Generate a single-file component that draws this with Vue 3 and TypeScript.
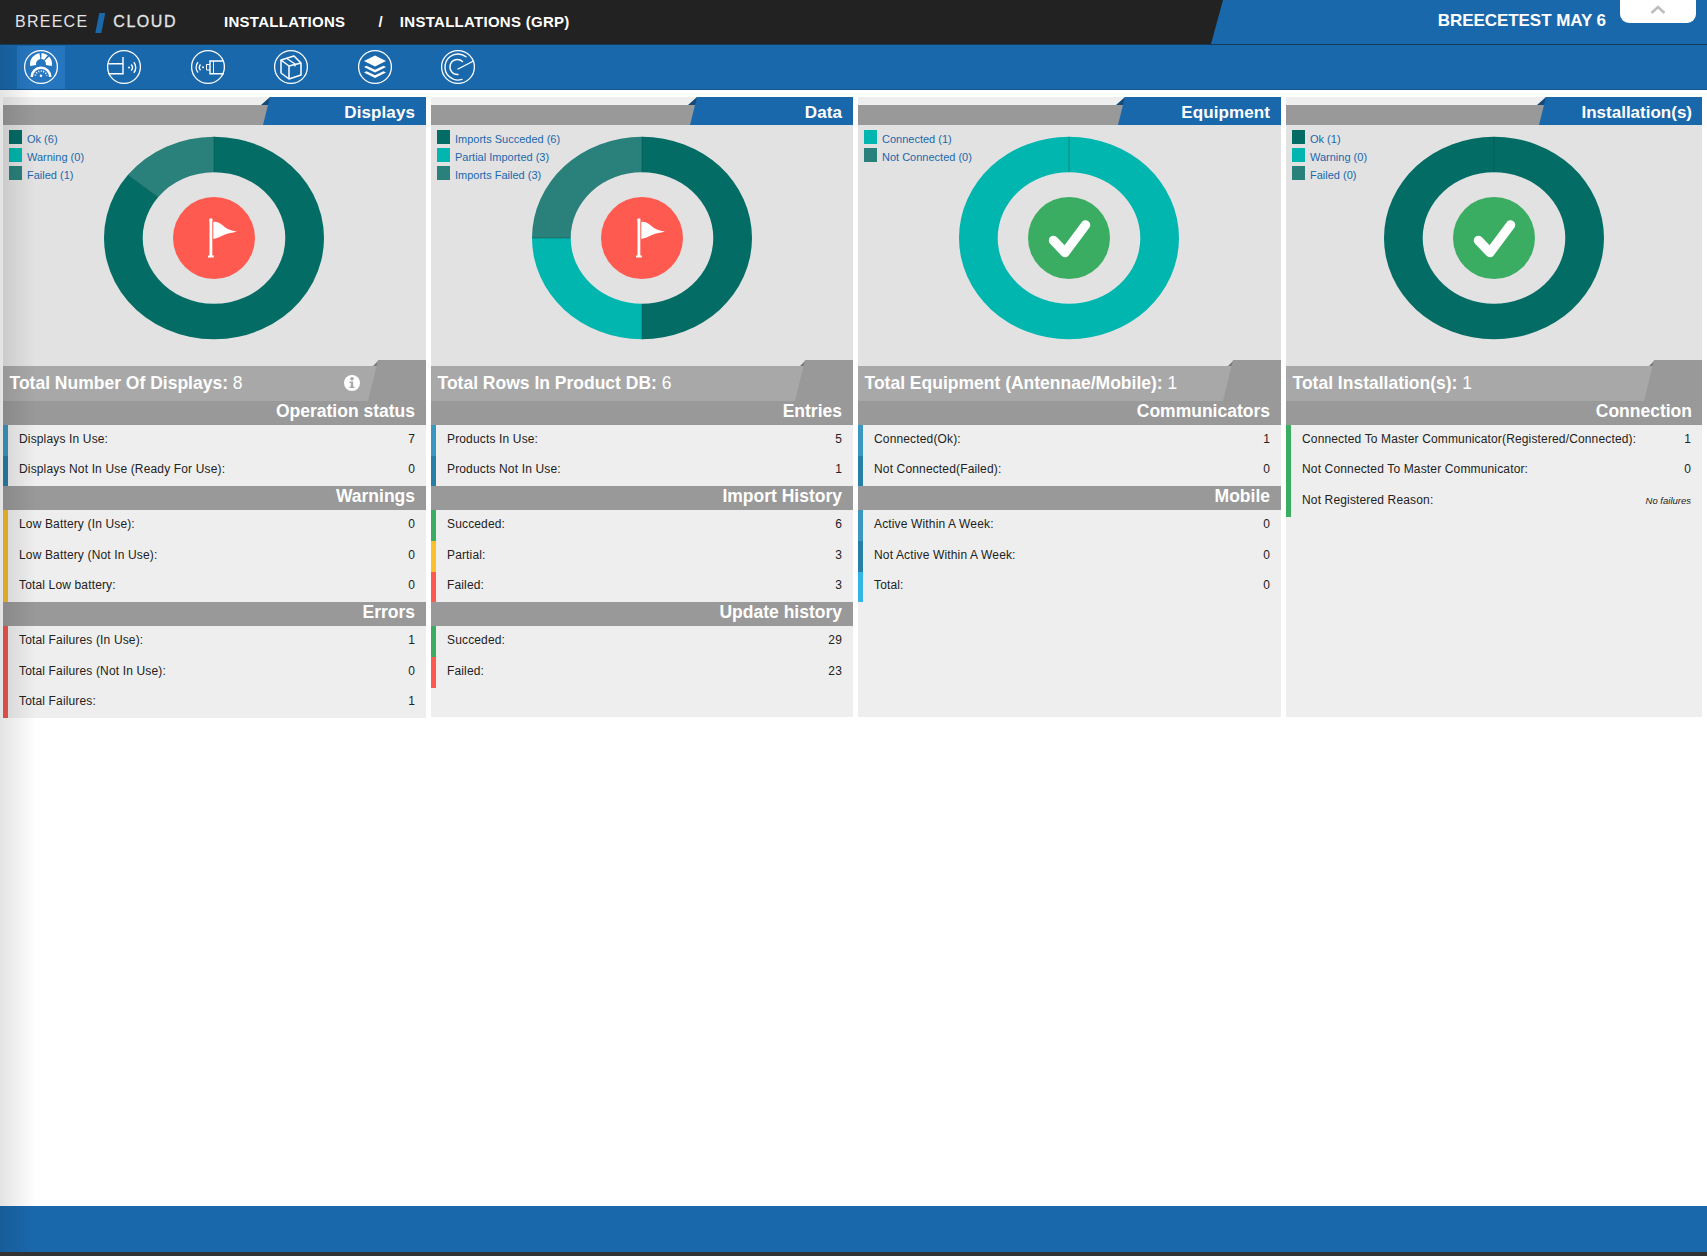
<script setup lang="ts">
interface Row { label: string; value: string; color: string; note?: boolean }
interface Section { title: string; rows: Row[] }
interface Legend { label: string; color: string; count: number }
interface Panel { tab: string; total: string; count: string; info?: boolean; ok: boolean; legend: Legend[]; sections: Section[] }

const DARK = '#026c65', TEAL = '#00b6ae', MID = '#2a807b'
const B1 = '#3a97bf', B2 = '#287fa6', B3 = '#35b5e5', Y = '#f2bb2c', Y2 = '#fbc02d', R = '#f0544f', R2 = '#ff5a4f', G = '#3bad62'

const panels: Panel[] = [
  { tab: 'Displays', total: 'Total Number Of Displays:', count: '8', info: true, ok: false,
    legend: [{ label: 'Ok (6)', color: DARK, count: 6 }, { label: 'Warning (0)', color: TEAL, count: 0 }, { label: 'Failed (1)', color: MID, count: 1 }],
    sections: [
      { title: 'Operation status', rows: [{ label: 'Displays In Use:', value: '7', color: B1 }, { label: 'Displays Not In Use (Ready For Use):', value: '0', color: B2 }] },
      { title: 'Warnings', rows: [{ label: 'Low Battery (In Use):', value: '0', color: Y }, { label: 'Low Battery (Not In Use):', value: '0', color: Y }, { label: 'Total Low battery:', value: '0', color: Y }] },
      { title: 'Errors', rows: [{ label: 'Total Failures (In Use):', value: '1', color: R }, { label: 'Total Failures (Not In Use):', value: '0', color: R }, { label: 'Total Failures:', value: '1', color: R }] },
    ] },
  { tab: 'Data', total: 'Total Rows In Product DB:', count: '6', ok: false,
    legend: [{ label: 'Imports Succeded (6)', color: DARK, count: 6 }, { label: 'Partial Imported (3)', color: TEAL, count: 3 }, { label: 'Imports Failed (3)', color: MID, count: 3 }],
    sections: [
      { title: 'Entries', rows: [{ label: 'Products In Use:', value: '5', color: B1 }, { label: 'Products Not In Use:', value: '1', color: B2 }] },
      { title: 'Import History', rows: [{ label: 'Succeded:', value: '6', color: G }, { label: 'Partial:', value: '3', color: Y2 }, { label: 'Failed:', value: '3', color: R2 }] },
      { title: 'Update history', rows: [{ label: 'Succeded:', value: '29', color: G }, { label: 'Failed:', value: '23', color: R2 }] },
    ] },
  { tab: 'Equipment', total: 'Total Equipment (Antennae/Mobile):', count: '1', ok: true,
    legend: [{ label: 'Connected (1)', color: TEAL, count: 1 }, { label: 'Not Connected (0)', color: MID, count: 0 }],
    sections: [
      { title: 'Communicators', rows: [{ label: 'Connected(Ok):', value: '1', color: B1 }, { label: 'Not Connected(Failed):', value: '0', color: B2 }] },
      { title: 'Mobile', rows: [{ label: 'Active Within A Week:', value: '0', color: B1 }, { label: 'Not Active Within A Week:', value: '0', color: B2 }, { label: 'Total:', value: '0', color: B3 }] },
    ] },
  { tab: 'Installation(s)', total: 'Total Installation(s):', count: '1', ok: true,
    legend: [{ label: 'Ok (1)', color: DARK, count: 1 }, { label: 'Warning (0)', color: TEAL, count: 0 }, { label: 'Failed (0)', color: MID, count: 0 }],
    sections: [
      { title: 'Connection', rows: [{ label: 'Connected To Master Communicator(Registered/Connected):', value: '1', color: G }, { label: 'Not Connected To Master Communicator:', value: '0', color: G }, { label: 'Not Registered Reason:', value: 'No failures', color: G, note: true }] },
    ] },
]

const RX = 110, RY = 101.3, IX = 71.3, IY = 65.8
const pt = (a: number, rx: number, ry: number) => `${(Math.sin(a) * rx).toFixed(2)} ${(-Math.cos(a) * ry).toFixed(2)}`

function arc(a0: number, a1: number): string {
  const large = a1 - a0 > Math.PI ? 1 : 0
  return `M${pt(a0, RX, RY)}A${RX} ${RY} 0 ${large} 1 ${pt(a1, RX, RY)}L${pt(a1, IX, IY)}A${IX} ${IY} 0 ${large} 0 ${pt(a0, IX, IY)}Z`
}

function slices(legend: Legend[]) {
  const sum = legend.reduce((s, l) => s + l.count, 0)
  let a = 0
  const out: { d: string; color: string; seam: string }[] = []
  for (const l of legend) {
    if (!l.count) continue
    const span = (l.count / sum) * Math.PI * 2
    const seam = `M${pt(a, IX, IY)}L${pt(a, RX, RY)}`
    if (span >= Math.PI * 2 - 0.001) {
      out.push({ d: arc(0, Math.PI) + arc(Math.PI, Math.PI * 2), color: l.color, seam })
    } else {
      out.push({ d: arc(a, a + span), color: l.color, seam })
    }
    a += span
  }
  return out
}

const navIcons = ['gauge', 'antenna', 'reader', 'box', 'layers', 'radar']
</script>

<template>
  <div class="page">
    <header class="top">
      <div class="logo">
        <span class="logo-a">BREECE</span>
        <span class="logo-slash"></span>
        <span class="logo-b">CLOUD</span>
      </div>
      <nav class="crumbs">
        <span>INSTALLATIONS</span>
        <span class="crumb-sep">/</span>
        <span>INSTALLATIONS (GRP)</span>
      </nav>
      <div class="account">
        <span class="account-name">BREECETEST MAY 6</span>
        <button class="collapse" type="button" aria-label="Collapse">
          <svg width="16" height="9" viewBox="0 0 16 9"><path d="M1.500 8 8 2l6.500 6" fill="none" stroke="#bdbdbd" stroke-width="2.600" /></svg>
        </button>
      </div>
    </header>

    <div class="toolbar">
      <a v-for="(ic, i) in navIcons" :key="ic" class="tool" :class="{ active: i === 0 }">
        <svg width="36" height="36" viewBox="-18 -18 36 36" fill="none" stroke="#fff">
          <circle r="16.400" stroke-width="1.300" />
          <g v-if="ic === 'gauge'">
            <path d="M-7.900-1.600A8 8 0 0 1-1.100-10.900" stroke-width="6" />
            <path d="M.4-11A8 8 0 0 1 4.900-9.300" stroke-width="6" />
            <path d="M5.900-8.400A8 8 0 0 1 7.900-1.600" stroke-width="6" />
            <path d="M-12 10A12 12 0 0 1 12 10Z" fill="#2676bf" stroke="none" />
            <path d="M-10.500 10A10.500 10.500 0 0 1 10.500 10H8A8 8 0 0 0-8 10Z" fill="#fff" stroke="none" />
            <path d="M-5.800 8.500A6 6 0 0 1 5.800 8.500" stroke-width="1.800" stroke-dasharray="1 1.500" />
            <circle cy="8.800" r="1.300" fill="#fff" stroke="none" />
          </g>
          <g v-else-if="ic === 'antenna'" stroke-width="1.400">
            <path d="M-15.500-3.300H-1M-15.500 6.700H-1M-1-10V7.400" />
            <circle cx="5" cy=".5" r="1" fill="#fff" stroke="none" />
            <path d="M7.200-2.500A4.500 4.500 0 0 1 7.200 3.500" />
            <path d="M9.800-4.700A8 8 0 0 1 9.800 5.700" />
          </g>
          <g v-else-if="ic === 'reader'" stroke-width="1.400">
            <path d="M15.500-6H2V6.700H15.500" />
            <path d="M5.500-6V6.700" stroke-width="1" />
            <path d="M2-2.500H-1.500V3H2" stroke-width="1" />
            <circle cx="-5" cy=".3" r="1" fill="#fff" stroke="none" />
            <path d="M-7.500-2.500A4.500 4.500 0 0 0-7.500 3.300" />
            <path d="M-10-4.700A8 8 0 0 0-10 5.500" />
          </g>
          <g v-else-if="ic === 'box'" stroke-width="1.500" stroke-linejoin="round">
            <path d="M-10-7 3-11 10-4V8L-2 12-10 6Z" />
            <path d="M-10-7-2-1 10-4M-2-1V12" />
            <path d="M-4.500-8.800 4-3V-.5" stroke-width="1.200" />
          </g>
          <g v-else-if="ic === 'layers'">
            <path d="M0-11.500 11-6 0-.5-11-6Z" fill="#fff" stroke="none" />
            <path d="M-11 0-8.500-1.300 0 2.800 8.500-1.300 11 0 0 5.500Z" fill="#fff" stroke="none" />
            <path d="M-11 5.500-8.500 4.200 0 8.300 8.500 4.200 11 5.500 0 11Z" fill="#fff" stroke="none" />
          </g>
          <g v-else stroke-width="1.400" stroke-linecap="round">
            <path d="M8-10.200A13 13 0 1 0 4 12.400" />
            <path d="M4.500-5.500A7.500 7.500 0 1 0 0 7.500" />
            <path d="M0 2 15.500-6" />
          </g>
        </svg>
      </a>
    </div>

    <main class="board">
      <section v-for="p in panels" :key="p.tab" class="panel">
        <div class="panel-head">
          <h2 class="panel-tab">{{ p.tab }}</h2>
        </div>
        <div class="chart">
          <ul class="legend">
            <li v-for="l in p.legend" :key="l.label" class="legend-item">
              <i class="swatch" :style="{ background: l.color }"></i>{{ l.label }}
            </li>
          </ul>
          <svg class="donut" width="222" height="204" viewBox="-111 -102 222 204">
            <path v-for="(s, i) in slices(p.legend)" :key="'s' + i" :d="s.d" :fill="s.color" />
            <path v-for="(s, i) in slices(p.legend)" :key="'l' + i" :d="s.seam" stroke="#014f4a" stroke-opacity=".45" stroke-width="1" fill="none" />
            <circle r="41" :fill="p.ok ? '#3bad62' : '#ff5a4f'" />
            <g v-if="p.ok">
              <path d="M-15.500 2.500-4 14.500 16.500-13" fill="none" stroke="#fff" stroke-width="9.500" stroke-linejoin="round" stroke-linecap="round" />
            </g>
            <g v-else fill="#fff">
              <rect x="-4.500" y="-17" width="2.800" height="36" />
              <circle cx="-3.100" cy="-18" r="1.800" />
              <rect x="-6" y="17.500" width="5.800" height="2" />
              <path d="M-.7-16C4-17 8-13 12-10 15-8 19-7 23-6.500 18-5 14-5 10-3 6-1 3 0-.7 1Z" />
            </g>
          </svg>
        </div>
        <div class="total">
          <span class="total-text">{{ p.total }} <span class="total-count">{{ p.count }}</span></span>
          <svg v-if="p.info" class="info" width="16" height="16" viewBox="0 0 16 16">
            <circle cx="8" cy="8" r="8" fill="#fff" />
            <circle cx="8" cy="3.800" r="1.800" fill="#a8a8a8" />
            <path d="M5.500 6.500H9.200V11.500H10.500V13H5.500V11.500H6.800V8H5.500Z" fill="#a8a8a8" />
          </svg>
          <span class="total-fold"></span>
        </div>
        <div v-for="s in p.sections" :key="s.title">
          <h3 class="sec-title">{{ s.title }}</h3>
          <div v-for="r in s.rows" :key="r.label" class="row" :style="{ borderLeftColor: r.color }">
            <span>{{ r.label }}</span>
            <span :class="r.note ? 'note' : 'val'">{{ r.value }}</span>
          </div>
        </div>
      </section>
    </main>

    <footer class="bottom"></footer>
    <div class="edge-shade"></div>
  </div>
</template>

<style>
html, body { margin: 0; padding: 0; background: #fff; }
</style>

<style scoped>
.page {
  position: relative;
  display: flex;
  flex-direction: column;
  height: 1257px;
  overflow: hidden;
  font-family: "Liberation Sans", Arial, sans-serif;
  background: #fff;
}

/* top bar */
.top {
  display: flex;
  align-items: center;
  height: 44px;
  border-bottom: 1px solid #143a5c;
  background: #222;
  color: #fff;
}
.logo {
  display: flex;
  align-items: center;
  flex: none;
  width: 224px;
  padding-left: 15px;
  box-sizing: border-box;
  font-size: 16px;
  color: #e4e4e4;
  letter-spacing: 1.25px;
}
.logo-slash {
  width: 10px;
  height: 20px;
  margin: 2px 8px 0 7px;
  background: #1a68ac;
  clip-path: polygon(40% 0, 100% 0, 60% 100%, 0 100%);
}
.logo-b { letter-spacing: 1.55px; font-weight: 400; -webkit-text-stroke: .3px #e4e4e4; }
.crumbs {
  display: flex;
  flex: 1;
  margin-top: -2px;
  font-size: 15px;
  font-weight: 700;
  letter-spacing: .28px;
}
.crumb-sep { margin: 0 17px 0 33px; }
.account {
  position: relative;
  display: flex;
  justify-content: flex-end;
  flex: none;
  width: 496px;
  align-self: stretch;
  background: #1a68ac;
  clip-path: polygon(12px 0, 100% 0, 100% 100%, 0 100%);
}
.account-name {
  margin: 11px 101px 0 0;
  font-size: 17px;
  font-weight: 700;
  letter-spacing: -.05px;
}
.collapse {
  position: absolute;
  top: 0;
  right: 11px;
  width: 76px;
  height: 23px;
  border: 0;
  padding: 0 0 4px;
  background: #fff;
  border-radius: 0 0 9px 9px;
}

/* icon strip */
.toolbar {
  display: flex;
  align-items: center;
  gap: 35.400px;
  height: 45px;
  padding-left: 17px;
  box-sizing: border-box;
  border-bottom: 1px solid #14568f;
  background: #1a68ac;
}
.tool {
  display: flex;
  justify-content: center;
  align-items: center;
  width: 48px;
  height: 43px;
}
.tool.active { background: #2676bf; }

/* panels */
.board {
  flex: 1;
  display: grid;
  grid-template-columns: 423px 422px 423px 416px;
  column-gap: 5px;
  align-items: start;
  padding: 7px 0 0 3px;
}
.panel {
  min-height: 620px;
  background: #eee;
}
.panel-head {
  position: relative;
  height: 20px;
  margin-top: 8px;
  background: #999;
}
.panel-head::before {
  content: "";
  position: absolute;
  top: -8px;
  right: 156px;
  width: 9px;
  height: 8px;
  background: #134a7b;
  clip-path: polygon(100% 0, 100% 100%, 0 100%);
}
.panel-tab {
  position: absolute;
  top: -8px;
  right: 0;
  width: 163px;
  height: 28px;
  margin: 0;
  box-sizing: border-box;
  padding: 6px 11px 0 0;
  background: #1a68ac;
  clip-path: polygon(7px 0, 100% 0, 100% 100%, 0 100%);
  color: #fff;
  font-size: 17px;
  line-height: 20px;
  font-weight: 700;
  letter-spacing: .1px;
  text-align: right;
}
.panel:last-child .panel-tab { padding-right: 10px; letter-spacing: 0; }
.chart {
  position: relative;
  display: flex;
  justify-content: center;
  height: 241px;
  background: #e2e2e2;
}
.donut { margin-top: 11px; }
.panel:nth-child(odd) .donut { margin-right: 1px; }
.legend {
  position: absolute;
  top: 5px;
  left: 6px;
  margin: 0;
  padding: 0;
  list-style: none;
}
.legend-item {
  display: flex;
  align-items: flex-start;
  height: 18px;
  color: #1a68ac;
  font-size: 11px;
  line-height: 18px;
}
.swatch {
  width: 13px;
  height: 14px;
  margin-right: 5px;
}
.total {
  position: relative;
  display: flex;
  align-items: center;
  height: 35px;
  padding-left: 6.500px;
  background: #a8a8a8;
  color: #fff;
  font-size: 17.500px;
  font-weight: 700;
}
.total-text, .info { position: relative; z-index: 1; }
.total-count { font-weight: 400; }
.info { position: absolute; left: 341px; top: 9px; }
.total-fold {
  position: absolute;
  right: 0;
  bottom: 0;
  width: 58px;
  height: 41px;
  background: #999;
  clip-path: polygon(10px 0, 100% 0, 100% 100%, 0 100%);
}
.total::before {
  content: "";
  position: absolute;
  right: 47px;
  top: -6px;
  width: 6px;
  height: 6px;
  background: #777;
  clip-path: polygon(100% 0, 100% 100%, 0 100%);
}
.sec-title {
  height: 24px;
  margin: 0;
  box-sizing: border-box;
  padding-right: 11px;
  background: #999;
  color: #fff;
  font-size: 17.500px;
  line-height: 21px;
  font-weight: 700;
  text-align: right;
}
.panel:last-child .sec-title { padding-right: 10px; }
.row {
  display: flex;
  justify-content: space-between;
  align-items: center;
  height: 30.670px;
  box-sizing: border-box;
  padding: 0 11px 3px 11px;
  border-left: 5px solid;
  color: #222;
  font-size: 12px;
  letter-spacing: .15px;
}
.note { font-size: 9.500px; font-style: italic; letter-spacing: 0; }

.bottom {
  flex: none;
  height: 46px;
  margin-bottom: 5px;
  background: #1a68ac;
  box-shadow: 0 4px 0 #333;
}
.edge-shade {
  position: absolute;
  top: 45px;
  bottom: 5px;
  left: 0;
  width: 36px;
  background: linear-gradient(to right, rgba(0, 0, 0, .11), rgba(0, 0, 0, 0));
  pointer-events: none;
}
</style>
